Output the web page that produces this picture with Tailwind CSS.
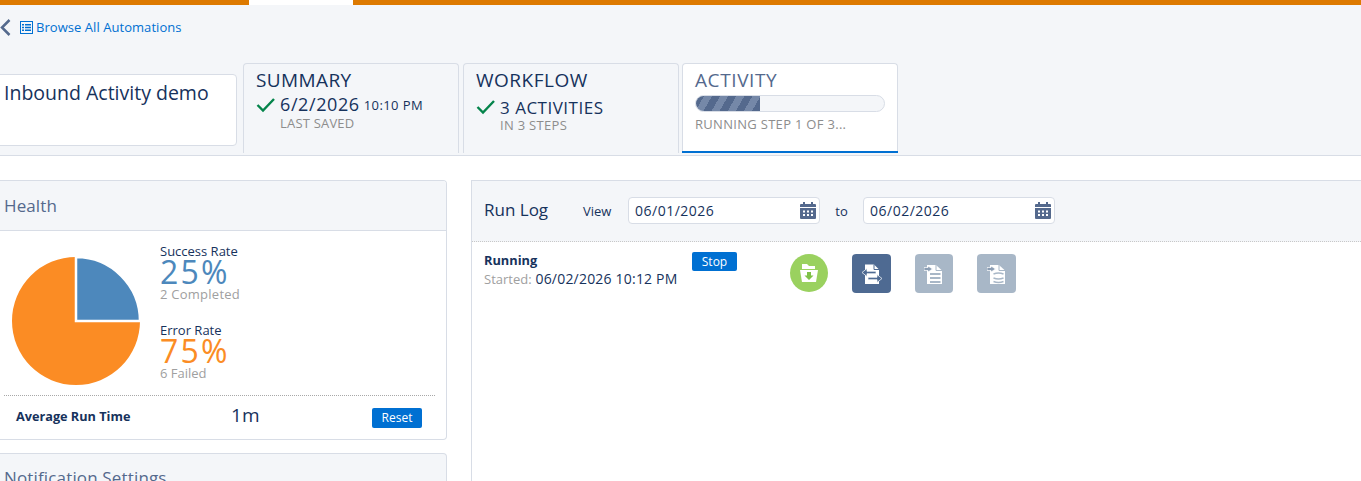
<!DOCTYPE html>
<html>
<head>
<meta charset="utf-8">
<script src="https://cdn.jsdelivr.net/npm/@tailwindcss/browser@4"></script>
</head>
<body class="bg-white overflow-hidden font-['Open_Sans','Noto_Sans',sans-serif] text-[#16325c]">
<div class="w-[1361px] h-[481px] overflow-hidden">
  <header class="h-[156px] bg-[#f4f6f9] border-b border-[#d8dde6] flex flex-col">
    <div class="h-[5px] flex shrink-0">
      <div class="w-[249px] bg-[#dd7a01]"></div>
      <div class="w-[104px] bg-white"></div>
      <div class="flex-1 bg-[#dd7a01]"></div>
    </div>
    <div class="h-[44px] flex items-center pt-[1px]">
      <svg class="w-[11px] h-[17px]" viewBox="0 0 11 17" fill="none" stroke="#54698d" stroke-width="2.5"><path d="M9.5 1 L2 8.500 L9.500 16"/></svg>
      <svg class="w-[13px] h-[13px] ml-[9px] mr-[3px]" viewBox="0 0 13 13"><rect x="0.5" y="0.5" width="12" height="12" fill="none" stroke="#0070d2"/><path d="M2 3h2v1.500H2zM5 3h6v1.500H5zM2 5.800h2v1.500H2zM5 5.800h6v1.500H5zM2 8.600h2v1.500H2zM5 8.600h6v1.500H5z" fill="#0070d2"/></svg>
      <a class="text-[13px] leading-none text-[#0070d2] tracking-[0.05px]">Browse All Automations</a>
    </div>
    <div class="flex flex-1 items-stretch pt-[14px] pb-[2px] min-h-0">
      <div class="w-[238px] h-[72px] mt-[11px] ml-[-1px] pl-[4px] pt-[5px] bg-white border border-[#d8dde6] rounded-r-[4px] text-[19.5px] leading-[26px] shrink-0">Inbound Activity demo</div>
      <div class="w-[216px] ml-[6px] pl-[12px] pt-[3px] border border-b-0 border-[#d8dde6] rounded-t-[4px] shrink-0">
        <div class="text-[19px] leading-[26px] tracking-[0.4px]">SUMMARY</div>
        <div class="flex items-center h-[24px] -mt-[1px]">
          <svg class="w-[20px] h-[16px] mr-[4px] mt-[2px]" viewBox="0 0 20 16" fill="none" stroke="#04844b" stroke-width="2.4"><path d="M1.500 8 L7 13.500 L18 2"/></svg>
          <span class="text-[18px] leading-none tracking-[0.6px]">6/2/2026</span><span class="text-[13px] leading-none ml-[4px] mt-[2px] tracking-[0.4px]">10:10 PM</span>
        </div>
        <div class="text-[13px] leading-[16px] text-[#8d8d8d] pl-[24px] -mt-[1px] tracking-[0.2px]">LAST SAVED</div>
      </div>
      <div class="w-[216px] ml-[4px] pl-[12px] pt-[3px] border border-b-0 border-[#d8dde6] rounded-t-[4px] shrink-0">
        <div class="text-[19px] leading-[26px] tracking-[0.5px]">WORKFLOW</div>
        <div class="flex items-center h-[24px] mt-[2px]">
          <svg class="w-[20px] h-[16px] mr-[4px]" viewBox="0 0 20 16" fill="none" stroke="#04844b" stroke-width="2.4"><path d="M1.500 8 L7 13.500 L18 2"/></svg>
          <span class="text-[17px] leading-none tracking-[0.5px]">3 ACTIVITIES</span>
        </div>
        <div class="text-[13px] leading-[16px] text-[#8d8d8d] pl-[24px] -mt-[2px] tracking-[0.3px]">IN 3 STEPS</div>
      </div>
      <div class="w-[216px] ml-[3px] pl-[12px] pt-[3px] bg-white border border-b-0 border-[#d8dde6] rounded-t-[4px] shrink-0 relative">
        <div class="text-[19px] leading-[26px] text-[#54698d] tracking-[0.6px]">ACTIVITY</div>
        <div class="w-[190px] h-[17px] rounded-full bg-[#f4f6f9] border border-[#d8dde6] overflow-hidden mt-[2px]">
          <div class="w-[64px] h-full bg-[repeating-linear-gradient(-60deg,#54698d_0,#54698d_7px,#7588a8_7px,#7588a8_14px)]"></div>
        </div>
        <div class="text-[13px] leading-[16px] text-[#8d8d8d] mt-[4px] tracking-[0.3px]">RUNNING STEP 1 OF 3...</div>
        <div class="absolute left-[-1px] right-[-1px] bottom-[0px] h-[2px] bg-[#0070d2]"></div>
      </div>
    </div>
  </header>

  <main class="flex items-start pt-[24px]">
    <div class="w-[447px] shrink-0 flex flex-col gap-[13px]">
      <section class="h-[260px] border border-l-0 border-[#d8dde6] rounded-r-[4px] bg-white overflow-hidden">
        <div class="h-[50px] bg-[#f4f6f9] border-b border-[#d8dde6] pl-[4px] flex items-center text-[17px] tracking-[0.1px] text-[#54698d]">Health</div>
        <div class="h-[209px] pl-[4px] pr-[12px] flex flex-col">
          <div class="flex h-[164px] shrink-0">
            <svg class="w-[130px] h-[130px] ml-[7px] mt-[25px] shrink-0" viewBox="0 0 130 130">
              <path d="M65 65 L65 1 A64 64 0 1 0 129 65 Z" fill="#fb8c24"/>
              <path d="M65 65 L65 1 A64 64 0 0 1 129 65 Z" fill="#4d88bc" stroke="#fff" stroke-width="2.500"/>
            </svg>
            <div class="ml-[19px] pt-[12px]">
              <div class="text-[13px] leading-[16px]">Success Rate</div>
              <div class="text-[32px] leading-[24px] text-[#4d88bc] tracking-[2.2px] mt-[1px]">25%</div>
              <div class="text-[13px] leading-[12px] text-[#a0a0a0] mt-[4px] tracking-[0.25px]">2 Completed</div>
              <div class="text-[13px] leading-[16px] mt-[22px]">Error Rate</div>
              <div class="text-[32px] leading-[24px] text-[#fb8c24] tracking-[2.2px] mt-[1px]">75%</div>
              <div class="text-[13px] leading-[12px] text-[#a0a0a0] mt-[4px]">6 Failed</div>
            </div>
          </div>
          <div class="border-t border-dotted border-[#a8a8a8] flex items-center h-[44px] pl-[12px] pr-[13px] -mr-[1px]">
            <span class="text-[12.7px] font-bold w-[216px] mb-[2px]">Average Run Time</span>
            <span class="text-[19px] mb-[4px] -ml-[1px] tracking-[0.2px]">1m</span>
            <span class="ml-auto w-[50px] h-[20px] rounded-[2px] bg-[#0070d2] text-white text-[12px] flex items-center justify-center">Reset</span>
          </div>
        </div>
      </section>
      <section class="h-[60px] border border-l-0 border-[#d8dde6] rounded-r-[4px] bg-[#f4f6f9] pl-[4px] pt-[12px] text-[17px] leading-[24px] tracking-[0.15px] text-[#54698d]">Notification Settings</section>
    </div>

    <section class="ml-[24px] flex-1 h-[320px] border border-[#d8dde6] border-r-0 bg-white">
      <div class="h-[61px] bg-[#f4f6f9] border-b border-dotted border-[#c8c8c8] flex items-center pl-[12px] pb-[2px]">
        <span class="text-[17px] leading-none w-[99px] mb-[2px]">Run Log</span>
        <span class="text-[13px] w-[45px] mt-[4px]">View</span>
        <div class="w-[192px] h-[27px] bg-white border border-[#d8dde6] rounded-[4px] flex items-center justify-between pl-[6px] pr-[3px] text-[14px] tracking-[0.5px]">06/01/2026
          <svg class="w-[16px] h-[17px]" viewBox="0 0 16 17" fill="#54698d"><rect x="3" y="0" width="2" height="3"/><rect x="11" y="0" width="2" height="3"/><path d="M1 2h14a1 1 0 0 1 1 1v2H0V3a1 1 0 0 1 1-1zM0 6h16v10a1 1 0 0 1-1 1H1a1 1 0 0 1-1-1z"/><path d="M3 8.500h2v2H3zM7 8.500h2v2H7zM11 8.500h2v2h-2zM3 12h2v2H3zM7 12h2v2H7zM11 12h2v2h-2z" fill="#fff"/></svg>
        </div>
        <span class="text-[13px] w-[43px] text-center mt-[4px]">to</span>
        <div class="w-[192px] h-[27px] bg-white border border-[#d8dde6] rounded-[4px] flex items-center justify-between pl-[6px] pr-[3px] text-[14px] tracking-[0.5px]">06/02/2026
          <svg class="w-[16px] h-[17px]" viewBox="0 0 16 17" fill="#54698d"><rect x="3" y="0" width="2" height="3"/><rect x="11" y="0" width="2" height="3"/><path d="M1 2h14a1 1 0 0 1 1 1v2H0V3a1 1 0 0 1 1-1zM0 6h16v10a1 1 0 0 1-1 1H1a1 1 0 0 1-1-1z"/><path d="M3 8.500h2v2H3zM7 8.500h2v2H7zM11 8.500h2v2h-2zM3 12h2v2H3zM7 12h2v2H7zM11 12h2v2h-2z" fill="#fff"/></svg>
        </div>
      </div>
      <div class="flex items-start pl-[12px] pt-[10px]">
        <div class="w-[208px] shrink-0">
          <div class="text-[12.8px] leading-[18px] font-bold -mt-[1px] mb-[1px]">Running</div>
          <div class="text-[14px] leading-[18px] whitespace-nowrap tracking-[0.2px]"><span class="text-[#a0a0a0] text-[13px] tracking-normal">Started:</span> 06/02/2026 10:12 PM</div>
        </div>
        <span class="w-[45px] h-[19px] rounded-[2px] bg-[#0070d2] text-white text-[12px] flex items-center justify-center">Stop</span>
        <div class="flex ml-[53px] mt-[2px] gap-[24px] items-start">
          <div class="w-[38px] h-[38px] rounded-full bg-[#9ad15f] flex items-center justify-center">
            <svg class="w-[20px] h-[20px]" viewBox="0 0 20 20"><path d="M3 1h5l2 2h6v3H3z" fill="#fff"/><path d="M1 7h18l-2 12H3z" fill="#fff"/><path d="M8 9h4v3.500h2.500L10 17l-4.500-4.500H8z" fill="#7fc247"/></svg>
          </div>
          <div class="w-[39px] h-[39px] rounded-[4px] bg-[#4e6a92] flex items-center justify-center">
            <svg class="w-[22px] h-[22px]" viewBox="0 0 22 22"><path d="M4 1.500h9L18 6.500V21H4z" fill="#fff"/><path d="M13 1.500v5h5" fill="none" stroke="#4e6a92" stroke-width="1"/><path d="M1 9.500L6 5.500v2.800h9v2.400H6v2.800z" fill="#4e6a92" stroke="#fff" stroke-width="0.700" stroke-linejoin="round"/><path d="M21 15.500L16 11.500v2.800H7v2.400h9v2.800z" fill="#4e6a92" stroke="#fff" stroke-width="0.700" stroke-linejoin="round"/></svg>
          </div>
          <div class="w-[38px] h-[39px] rounded-[4px] bg-[#a8b7c7] flex items-center justify-center">
            <svg class="w-[20px] h-[20px]" viewBox="0 0 20 20"><path d="M3 1h9l6 5.500V20H3z" fill="#fff"/><path d="M12 1v5.500h6" fill="none" stroke="#a8b7c7" stroke-width="1"/><path d="M0 3.500h4V2l4.500 3L4 8V6.500H0z" fill="#8b9db3" stroke="#fff" stroke-width="0.700"/><path d="M6 10h10.500M6 14h10.500M6 18h10.500" stroke="#a8b7c7" stroke-width="1.800"/></svg>
          </div>
          <div class="w-[39px] h-[39px] rounded-[4px] bg-[#a8b7c7] flex items-center justify-center">
            <svg class="w-[20px] h-[20px]" viewBox="0 0 20 20"><path d="M3 1h9l6 5.500V20H3z" fill="#fff"/><path d="M12 1v5.500h6" fill="none" stroke="#a8b7c7" stroke-width="1"/><path d="M0 3.500h4V2l4.500 3L4 8V6.500H0z" fill="#8b9db3" stroke="#fff" stroke-width="0.700"/><path d="M6.500 10q5-1.800 10 0M6.500 14q5 1.800 10 0M6.500 17.500q5 1.800 10 0" fill="none" stroke="#a8b7c7" stroke-width="1.500"/></svg>
          </div>
        </div>
      </div>
    </section>
  </main>
</div>
</body>
</html>
